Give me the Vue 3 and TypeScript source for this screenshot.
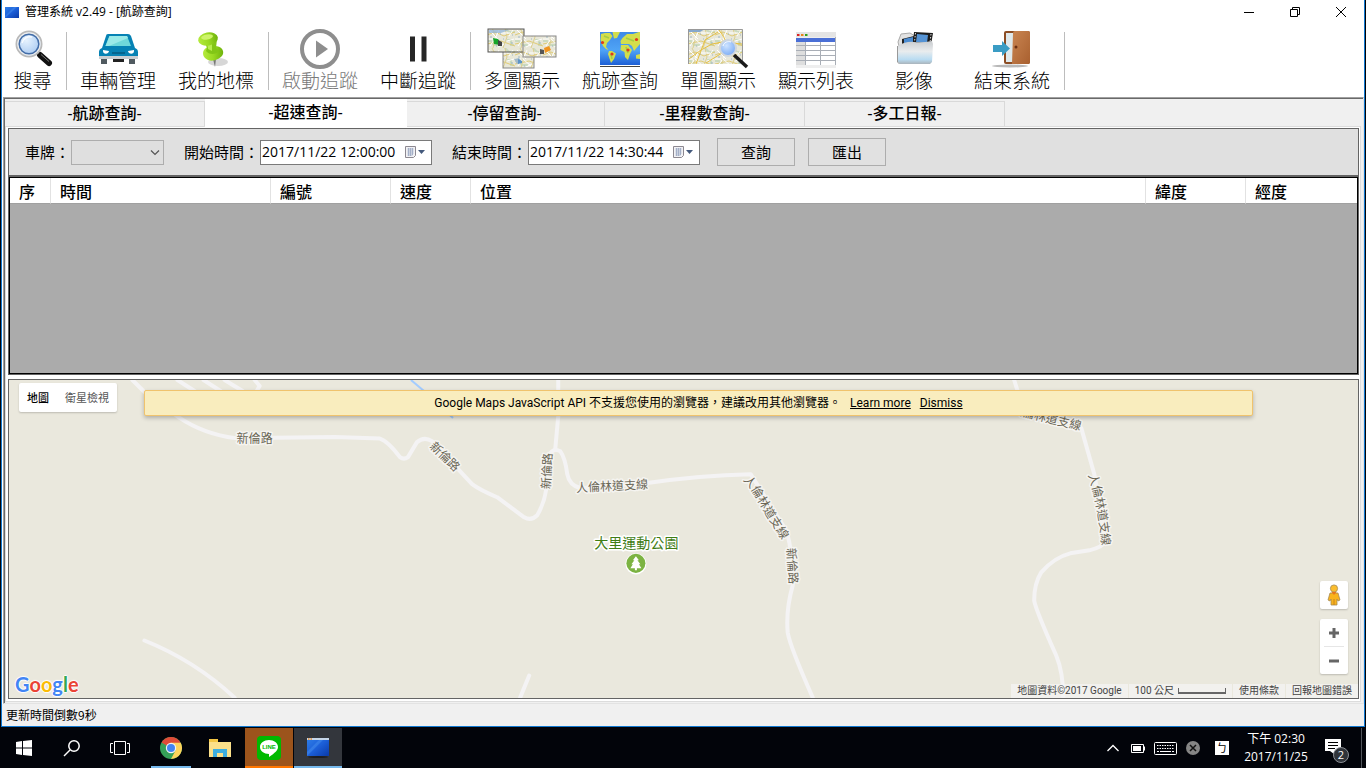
<script setup lang="ts">
import { ref } from 'vue'

const tabs = ['-航跡查詢-', '-超速查詢-', '-停留查詢-', '-里程數查詢-', '-多工日報-']
const activeTab = ref(1)

const columns = [
  { title: '序', cls: 'c-no' },
  { title: '時間', cls: 'c-time' },
  { title: '編號', cls: 'c-id' },
  { title: '速度', cls: 'c-speed' },
  { title: '位置', cls: 'c-place' },
  { title: '緯度', cls: 'c-lat' },
  { title: '經度', cls: 'c-lng' },
]

const startTime = ref('2017/11/22 12:00:00')
const endTime = ref('2017/11/22 14:30:44')
const plate = ref('')
</script>

<template>
  <div class="desktop">
    <svg class="defs" width="0" height="0" aria-hidden="true">
      <defs>
        <linearGradient id="gBlue" x1="0" y1="0" x2="1" y2="1">
          <stop offset="0" stop-color="#2f7fe8" /><stop offset=".5" stop-color="#1c5fd8" /><stop offset="1" stop-color="#0a3aa8" />
        </linearGradient>
        <radialGradient id="gLens" cx=".4" cy=".35" r=".7">
          <stop offset="0" stop-color="#e6f2fe" /><stop offset="1" stop-color="#a3c6f0" />
        </radialGradient>
        <radialGradient id="gLens2" cx=".4" cy=".35" r=".7">
          <stop offset="0" stop-color="#cfe4ff" /><stop offset="1" stop-color="#76a9f5" />
        </radialGradient>
        <linearGradient id="gGreen" x1="0" y1="0" x2="1" y2="0">
          <stop offset="0" stop-color="#b4ea3c" /><stop offset=".5" stop-color="#9ada22" /><stop offset="1" stop-color="#6fb30c" />
        </linearGradient>
        <linearGradient id="gSea" x1="0" y1="0" x2="0" y2="1">
          <stop offset="0" stop-color="#3e8ae8" /><stop offset=".55" stop-color="#4fa4f6" /><stop offset="1" stop-color="#1d5fd6" />
        </linearGradient>
        <linearGradient id="gSilver" x1="0" y1="0" x2="0" y2="1">
          <stop offset="0" stop-color="#c9cccf" /><stop offset=".45" stop-color="#e9ecee" /><stop offset=".8" stop-color="#b9dcf2" /><stop offset="1" stop-color="#aab4bb" />
        </linearGradient>
        <linearGradient id="gDoor" x1="0" y1="0" x2="1" y2="1">
          <stop offset="0" stop-color="#c98552" /><stop offset="1" stop-color="#a9602f" />
        </linearGradient>
        <pattern id="streets" width="28" height="20" patternUnits="userSpaceOnUse">
          <rect width="28" height="20" fill="#e8e7d8" />
          <path d="M0 13h4l3 4h6M18 0l4 4h6M20 12h4v5h3" stroke="#cbdabf" stroke-width="2" fill="none" />
          <path d="M0 7l8-3 9 4 11-4M0 16l14-3 14 5" stroke="#e0cb76" stroke-width="1" fill="none" />
          <path d="M5 0l4 8-3 12M18 0l2 9-4 11" stroke="#dccf8e" stroke-width="1" fill="none" />
          <path d="M2 2l9 9M12 2l-4 9 8 7M22 8l4-6M3 18l4-6M20 13l7-2M0 11h6M14 5h9M11 19l6-3" stroke="#fff" stroke-width="1" fill="none" />
          <path d="M3 9h2M13 6h1M24 15h2M9 18h1M16 11h1M25 7h1" stroke="#9db6c6" stroke-width="1" />
        </pattern>
      </defs>
    </svg>

    <main class="window">
      <header class="titlebar">
        <svg class="app-icon" viewBox="0 0 14 11"><rect width="14" height="11" fill="url(#gBlue)" /><path d="M0 9L9 0h3L0 11z" fill="#4f95f2" opacity=".4" /></svg>
        <h1>管理系統 v2.49 - [航跡查詢]</h1>
        <div class="win-buttons">
          <button type="button" aria-label="最小化"><svg viewBox="0 0 12 12"><path d="M1 6.500h10" /></svg></button>
          <button type="button" aria-label="還原"><svg viewBox="0 0 12 12"><path d="M1.500 3.500h7v7h-7zM3.500 3.500v-2h7v7h-2" /></svg></button>
          <button type="button" aria-label="關閉"><svg viewBox="0 0 12 12"><path d="M1 1l10 10M11 1L1 11" /></svg></button>
        </div>
      </header>

      <nav class="toolbar">
        <button type="button" class="tool tool-search">
          <svg width="40" height="42" viewBox="0 0 40 42">
            <path d="M24 25l3 3" stroke="#888" stroke-width="3" />
            <path d="M27 27l9 8" stroke="#111" stroke-width="6" stroke-linecap="round" />
            <path d="M28 26.500l8 7" stroke="#777" stroke-width="1" />
            <circle cx="16" cy="16" r="12.500" fill="url(#gLens)" stroke="#b9b9b9" stroke-width="2" />
            <circle cx="16" cy="16" r="11" fill="none" stroke="#ededed" stroke-width="1.500" />
            <circle cx="16" cy="16" r="9.800" fill="none" stroke="#436da8" stroke-width="1.500" />
            <path d="M9 15c1-5 6-7 10-6" stroke="#fff" stroke-width="1.500" fill="none" opacity=".8" />
          </svg>
          <span>搜尋</span>
        </button>
        <i class="sep"></i>
        <button type="button" class="tool">
          <svg width="40" height="42" viewBox="0 0 40 42">
            <path d="M3 30h6v6H3zM31 30h6v6h-6z" fill="#505a60" />
            <path d="M15 31h11v3H15z" fill="#222" />
            <path d="M10 6h20q2 0 3 2l4 12q3 1 3 4v5H1v-5q0-3 3-4L8 8q0-2 2-2z" fill="#0682b4" />
            <path d="M11.500 8h17.500l4 10H7.500z" fill="#6fd8da" />
            <path d="M18 8h11l1 2-19 8H7.500l4-10z" fill="#9aeae8" />
            <path d="M1 28h39v3H1z" fill="#c9ced2" />
            <path d="M5 22l6 1c0 3-6 4-6 0zM36 22l-6 1c0 3 6 4 6 0z" fill="#fff" />
            <path d="M14 25h13" stroke="#04648e" stroke-width="2" />
          </svg>
          <span>車輛管理</span>
        </button>
        <button type="button" class="tool">
          <svg width="40" height="42" viewBox="0 0 40 42">
            <ellipse cx="22" cy="34" rx="10" ry="4" fill="#c6c6c6" opacity=".7" />
            <path d="M17 31l2 8 1-8z" fill="#777" />
            <path d="M8 22c3-4 6-4 11-4 6 0 9 4 8 8-2 5-10 8-15 6-5-2-6-7-4-10z" fill="url(#gGreen)" />
            <path d="M8 12l13-1-1 9 3 3c-3 4-10 4-13 0l1-3z" fill="#82c616" />
            <path d="M11 14l5-1v10l-4-2z" fill="#b7ec4e" />
            <ellipse cx="12" cy="11" rx="10" ry="6.500" transform="rotate(-10 12 11)" fill="url(#gGreen)" />
            <ellipse cx="11" cy="9" rx="6" ry="2.500" transform="rotate(-10 11 9)" fill="#cdf36b" />
          </svg>
          <span>我的地標</span>
        </button>
        <i class="sep"></i>
        <button type="button" class="tool" disabled>
          <svg width="40" height="42" viewBox="0 0 40 42">
            <circle cx="20" cy="21" r="18" fill="none" stroke="#8e8e8e" stroke-width="4" />
            <path d="M16 12.500v17L28 21z" fill="#8e8e8e" />
          </svg>
          <span>啟動追蹤</span>
        </button>
        <button type="button" class="tool">
          <svg width="40" height="42" viewBox="0 0 40 42"><path d="M12 8.500h5v25h-5zM23.500 8.500h5v25h-5z" fill="#262626" /></svg>
          <span>中斷追蹤</span>
        </button>
        <i class="sep"></i>
        <button type="button" class="tool">
          <svg width="70" height="42" viewBox="0 0 70 42">
            <rect x="16" y="20" width="31" height="20" fill="url(#streets)" stroke="#888" />
            <rect x="1" y="1" width="36" height="23" fill="url(#streets)" stroke="#555" />
            <path d="M2 2h20l-8 3H2z" fill="#8db2dc" opacity=".7" />
            <rect x="36" y="8" width="33" height="21" fill="url(#streets)" stroke="#888" />
            <path d="M6 10l5 1 2 3v3l-6-1z" fill="#17a52a" /><path d="M11 12l4 2v4h-4z" fill="#444" />
            <path d="M57 20l5-2 2 4-6 3z" fill="#f0941f" /><path d="M53 21l4 1v4h-4z" fill="#555" />
            <path d="M27 31l5-1 3 4-5 2z" fill="#a3bac8" /><path d="M31 31l4 2v2l-4 1z" fill="#5c94c8" />
          </svg>
          <span>多圖顯示</span>
        </button>
        <button type="button" class="tool">
          <svg width="42" height="42" viewBox="0 0 42 42">
            <rect x="1" y="4" width="40" height="33" fill="url(#gSea)" />
            <g fill="#d3de4c">
              <path d="M2 6l4-1 5 0 2.500 3-2.500 4-3 3-1 4 2.500 3-2.500-1-3-3-2.500-6z" />
              <path d="M13.500 4H21l-3 6-3 .5z" />
              <path d="M10 23l3 0 4 2.500-2 5.500-3 4-1-3-2-6z" />
              <path d="M21.500 13l2-3 4.500-4 6 0 6-2h1v12l-3.500 4-2.500 3-2-5-3-2-5 0-3 0z" />
              <path d="M22 17l7 0 4 5-2 4-2 6-3-3-.5-5-4-2z" />
              <path d="M37 27l4-1v5l-4-.5z" />
            </g>
            <path d="M5 8l5 2M27 10l8 3M27 19l2 6M12 26l1 5" stroke="#a4cc44" stroke-width="1.500" />
            <g fill="#e03a1c"><circle cx="3.500" cy="14.500" r="1.600" /><circle cx="13" cy="26" r="1.600" /><circle cx="29" cy="22" r="1.600" /><circle cx="37.500" cy="11.500" r="1.600" /></g>
            <path d="M1 38.500h40" stroke="#444" stroke-width="1" />
          </svg>
          <span>航跡查詢</span>
        </button>
        <button type="button" class="tool">
          <svg width="62" height="42" viewBox="0 0 62 42">
            <rect x="1" y="1" width="55" height="35" fill="url(#streets)" />
            <path d="M1 1h17l-5 3H1z" fill="#86a8cc" /><path d="M1 1.500h54.500V36M1.500 1v35" stroke="#999" fill="none" />
            <path d="M2 31l12-9 11-6 10-2 20 2M9 36l9-24 13-8M32 2l6 9-3 14-16 10" stroke="#e6c040" stroke-width="1" fill="none" />
            <path d="M47 27l13 12" stroke="#1a1a1a" stroke-width="3.500" />
            <circle cx="41" cy="20" r="8" fill="url(#gLens2)" stroke="#cfd6dd" stroke-width="2" />
            <path d="M36 18c1-4 5-5 8-4" stroke="#fff" fill="none" />
          </svg>
          <span>單圖顯示</span>
        </button>
        <button type="button" class="tool">
          <svg width="42" height="42" viewBox="0 0 42 42">
            <rect x="1" y="4" width="40" height="36" fill="#eee" />
            <rect x="1" y="4" width="40" height="5" fill="#e4e4e4" />
            <g stroke-width="2"><path d="M2 7h2.500" stroke="#d22" /><path d="M6 7h2.500" stroke="#e8841c" /><path d="M10 7h2.500" stroke="#37a41c" /></g>
            <rect x="1" y="10" width="40" height="4" fill="#4a6fd6" />
            <rect x="1" y="14" width="40" height="23" fill="#fff" /><rect x="1" y="14" width="9" height="23" fill="#dedede" />
            <path d="M1 17.500h40M1 22.500h40M1 27.500h40M1 32.500h40M10.500 14v23M25.500 14v23M40.500 9v28" stroke="#a9aeb6" fill="none" />
          </svg>
          <span>顯示列表</span>
        </button>
        <button type="button" class="tool">
          <svg width="42" height="42" viewBox="0 0 42 42">
            <path d="M5 14l3-8 9-1 5 3v10H6z" fill="#e2e2e2" stroke="#aaa" />
            <path d="M9 11l12-3v9L9 19z" fill="#222" /><path d="M11 11l9-2v7h-9z" fill="#4b8bd0" />
            <path d="M21 4l19 1-2 12-18-2z" fill="#1b1b1b" /><path d="M24 6l11 1-1 8-11-1z" fill="#5593d4" />
            <path d="M38 6l-1 9M22.500 5l-1 9" stroke="#ddd" stroke-dasharray="1.500 1.500" />
            <path d="M5 18q8-5 16-4t18-1l1 3-1 18-2 2H7l-2-2z" fill="url(#gSilver)" />
            <path d="M4.500 18v16l2 2" stroke="#999" fill="none" />
          </svg>
          <span>影像</span>
        </button>
        <button type="button" class="tool">
          <svg width="42" height="42" viewBox="0 0 42 42">
            <ellipse cx="19" cy="38" rx="18" ry="1.500" fill="#b8b8b8" />
            <rect x="13" y="3" width="26" height="33" rx="2" fill="#8c4d24" />
            <rect x="15" y="5" width="9" height="29" fill="#dfe9ec" />
            <path d="M22 5q0-2 2-2h13q2 0 2 2v29q0 2-2 2H21z" fill="url(#gDoor)" />
            <circle cx="25" cy="19" r="1.500" fill="#6b2f12" />
            <path d="M2 17h9v-4l8 7.500-8 7.500v-4H2z" fill="#3a9cc4" />
          </svg>
          <span>結束系統</span>
        </button>
        <i class="sep"></i>
      </nav>

      <section class="mdi">
        <div class="tabs" role="tablist">
          <button
            v-for="(tab, i) in tabs"
            :key="tab"
            type="button"
            role="tab"
            class="tab"
            :class="{ active: i === activeTab }"
            :aria-selected="i === activeTab"
            @click="activeTab = i"
          >{{ tab }}</button>
        </div>

        <div class="page">
          <form class="filters" @submit.prevent>
            <div class="field">
              <label for="plate">車牌：</label>
              <div class="combo">
                <select id="plate" v-model="plate"><option value=""></option></select>
                <svg viewBox="0 0 10 6"><path d="M1 .5l4 4 4-4" fill="none" stroke="#555" stroke-width="1.200" /></svg>
              </div>
            </div>
            <div class="field">
              <label for="start">開始時間：</label>
              <div class="date">
                <input id="start" v-model="startTime" type="text" />
                <button type="button" aria-label="選擇開始時間">
                  <svg viewBox="0 0 21 13"><path d="M.5.5h10v9l-2 2h-8z" fill="#f2f2f5" stroke="#8c8890" /><path d="M2.500 3h6M2.500 5h6M2.500 7h6M2.500 9h5M3.500 2v8M5.500 2v8M7.500 2v7" stroke="#a4b0c8" /><path d="M13 4h7l-3.500 4z" fill="#44597c" /></svg>
                </button>
              </div>
            </div>
            <div class="field">
              <label for="end">結束時間：</label>
              <div class="date">
                <input id="end" v-model="endTime" type="text" />
                <button type="button" aria-label="選擇結束時間">
                  <svg viewBox="0 0 21 13"><path d="M.5.5h10v9l-2 2h-8z" fill="#f2f2f5" stroke="#8c8890" /><path d="M2.500 3h6M2.500 5h6M2.500 7h6M2.500 9h5M3.500 2v8M5.500 2v8M7.500 2v7" stroke="#a4b0c8" /><path d="M13 4h7l-3.500 4z" fill="#44597c" /></svg>
                </button>
              </div>
            </div>
            <div class="actions">
              <button type="submit">查詢</button>
              <button type="button">匯出</button>
            </div>
          </form>

          <div class="grid">
            <table>
              <thead>
                <tr><th v-for="c in columns" :key="c.title" :class="c.cls" scope="col">{{ c.title }}</th></tr>
              </thead>
            </table>
          </div>

          <div class="map">
            <svg class="roads" viewBox="9 380 1348 317" preserveAspectRatio="xMidYMid slice">
              <defs>
                <path id="lblA" d="M742 480C750 487 755 497 761 507S770 522 779 536" />
                <path id="lblB" d="M1090 475Q1101 508 1104 550" />
              </defs>
              <g class="road">
                <path d="M133 380L144 391L179 417Q204 434 236 438L335 437L380 438.500Q388 441 400 457Q404 460 408 457L417 442Q424 436 432 441L472 484Q480 490 497 497L524 517Q531 521 537 515Q544 503 546 489L548 456Q553 447 560 451Q565 458 567 474Q569 485 580 488L645 483Q700 475 750 474L786 531Q793 557 792 585Q785 610 787 632Q789 645 812 697" />
                <path d="M558 380V416L555 449M178 380L195 391M204 380L221 391M225 380L243 391M255 380L260 386L257 391" />
                <path d="M1013 380L1020 402L1080 428L1093 474L1104 540Q1102 547 1088 550L1069 553Q1053 557 1040 572Q1033 583 1033 600Q1034 608 1055 655Q1062 672 1062 697" />
                <path d="M145 640Q195 660 235 697M529 675L520 697" />
              </g>
              <path d="M411 380L424 391L453 418" class="stream" />
              <g class="label">
                <text x="237" y="443">新倫路</text>
                <text transform="translate(429 447) rotate(44)">新倫路</text>
                <text transform="translate(550 489) rotate(-87)">新倫路</text>
                <text transform="translate(576 492) rotate(-3)">人倫林道支線</text>
                <text><textPath href="#lblA">人倫林道支線</textPath></text>
                <text transform="translate(786 548) rotate(86)">新倫路</text>
                <text transform="translate(1009 413) rotate(14)">人倫林道支線</text>
                <text transform="translate(-3 0)"><textPath href="#lblB">人倫林道支線</textPath></text>
                <text class="park" x="594" y="548">大里運動公園</text>
              </g>
              <circle cx="635.500" cy="563.500" r="10.500" fill="#fff" />
              <circle cx="635.500" cy="563" r="9.500" fill="#7cb342" />
              <path d="M635.500 556l3 4h-1.500l3 4h-1.500l2.500 4h-4.500v2h-2v-2H630l2.500-4H631l3-4h-1.500z" fill="#fff" />
            </svg>

            <div class="map-type">
              <button type="button" class="on">地圖</button>
              <button type="button">衛星檢視</button>
            </div>

            <div class="notice">
              <span>Google Maps JavaScript API 不支援您使用的瀏覽器，建議改用其他瀏覽器。</span>
              <a href="#learn">Learn more</a>
              <a href="#dismiss">Dismiss</a>
            </div>

            <a class="logo" href="#google" aria-label="Google"><span class="b">G</span><span class="r">o</span><span class="y">o</span><span class="b">g</span><span class="g">l</span><span class="r">e</span></a>

            <div class="controls">
              <button type="button" class="pegman" aria-label="街景服務">
                <svg viewBox="0 0 14 22"><path d="M3 9h8l2 7-2 1-1-2v6H4v-6l-1 2-2-1z" fill="#f9b31c" stroke="#a58a55" stroke-width=".8" /><circle cx="7" cy="4.500" r="3.600" fill="#fbbd2c" stroke="#a58a55" stroke-width=".8" /><path d="M4.500 8h5L7 11z" fill="#e8761c" /><path d="M7 15v6" stroke="#c6831c" /></svg>
              </button>
              <div class="zoom">
                <button type="button" aria-label="放大"><svg viewBox="0 0 12 12"><path d="M1 6h10M6 1v10" /></svg></button>
                <button type="button" aria-label="縮小"><svg viewBox="0 0 12 12"><path d="M1 6h10" /></svg></button>
              </div>
            </div>

            <div class="credits">
              <span>地圖資料©2017 Google</span>
              <span class="scale">100 公尺<i></i></span>
              <a href="#terms">使用條款</a>
              <a href="#report">回報地圖錯誤</a>
            </div>
          </div>
        </div>
      </section>

      <footer class="status">更新時間倒數9秒</footer>
    </main>

    <footer class="taskbar">
      <button type="button" aria-label="開始"><svg width="18" height="18" viewBox="0 0 18 18"><path d="M1 3l6-1v6.500H1zM8 2l9-1v7.500H8zM1 9.500h6V16l-6-1zM8 9.500h9V17l-9-1z" fill="#fff" /></svg></button>
      <button type="button" aria-label="搜尋"><svg width="18" height="18" viewBox="0 0 18 18"><path d="M7 11L1 17" stroke="#fff" stroke-width="1.500" /><circle cx="11" cy="7" r="5.200" fill="none" stroke="#fff" stroke-width="1.500" /></svg></button>
      <button type="button" aria-label="工作檢視"><svg width="22" height="18" viewBox="0 0 22 18"><path d="M5.500 2.500h11v13h-11zM4 4.500H1.500v9H4M18 4.500h2.500v9H18" fill="none" stroke="#fff" /></svg></button>
      <button type="button" class="pinned running" aria-label="Chrome">
        <svg width="22" height="22" viewBox="0 0 22 22">
          <circle cx="11" cy="11" r="11" fill="#35a058" />
          <path d="M11 11L1.500 5.500A11 11 0 0 1 20.500 5.500z" fill="#df4b38" />
          <path d="M11 5.800h9.700A11 11 0 0 1 11 22l4.500-8.500z" fill="#fdd35c" />
          <circle cx="11" cy="11" r="5.200" fill="#f3f3f3" /><circle cx="11" cy="11" r="4" fill="#4384f3" />
        </svg>
      </button>
      <button type="button" aria-label="檔案總管">
        <svg width="22" height="20" viewBox="0 0 22 20"><path d="M0 2h8l1 2h13v15H0z" fill="#fbe08a" /><path d="M0 1h9v3H0z" fill="#f3c644" /><path d="M4 11h14v8h-4v-4H8v4H4z" fill="#3daee0" /></svg>
      </button>
      <button type="button" class="line" aria-label="LINE">
        <svg width="24" height="24" viewBox="0 0 24 24"><rect width="24" height="24" rx="4" fill="#00b900" /><path d="M12 4c5 0 9 3 9 7 0 3-3 6-9 10v-3c-5 0-9-3-9-7s4-7 9-7z" fill="#fff" /><text x="12" y="13" text-anchor="middle">LINE</text></svg>
      </button>
      <button type="button" class="current" aria-label="管理系統">
        <svg width="24" height="22" viewBox="0 0 24 22"><ellipse cx="12" cy="20" rx="10" ry="1" fill="#1d1e22" /><rect x="1" y="1" width="22" height="18" fill="url(#gBlue)" /><path d="M1 1h22v2H1z" fill="#c5d5e8" /><path d="M2 2h5" stroke="#e58a2c" stroke-width="1.500" stroke-dasharray="1.500 1" /><path d="M1 15L13 3h4L1 19z" fill="#5aa2f5" opacity=".35" /></svg>
      </button>

      <div class="tray">
        <svg width="12" height="8" viewBox="0 0 12 8"><path d="M.5 7L6 1.500 11.500 7" fill="none" stroke="#fff" stroke-width="1.300" /></svg>
        <svg width="15" height="9" viewBox="0 0 15 9"><path d="M.5.5h12v8H.5zM13.500 2.500v4" fill="none" stroke="#fff" /><path d="M2 2h8v5H2z" fill="#fff" /></svg>
        <svg width="23" height="13" viewBox="0 0 23 13"><rect x=".5" y=".5" width="22" height="12" rx="1" fill="none" stroke="#fff" /><path d="M3 3.500h17M3 6.500h17" stroke="#fff" stroke-dasharray="1.500 1" /><path d="M3 9.500h2m1 0h11m1 0h2" stroke="#fff" /></svg>
        <svg width="14" height="14" viewBox="0 0 14 14"><circle cx="7" cy="7" r="7" fill="#858585" /><path d="M4 4l6 6M10 4l-6 6" stroke="#111" stroke-width="1.500" /></svg>
        <span class="ime">ㄅ</span>
        <time>下午 02:30<br />2017/11/25</time>
        <div class="notify">
          <svg width="16" height="15" viewBox="0 0 16 15"><path d="M0 0h16v12h-7v3l-4-3H0z" fill="#fff" /><path d="M3 3.500h10M3 6.500h10M3 9.500h7" stroke="#000" /></svg>
          <b>2</b>
        </div>
        <i class="peek"></i>
      </div>
    </footer>
  </div>
</template>

<style>
body { background: #000; }
button, input, select { font: inherit; color: inherit; }
</style>

<style scoped>
* { box-sizing: border-box; }
.desktop {
  min-height: 100vh; display: flex; flex-direction: column; background: #02040a; color: #000;
  font-family: "Open Sans", "Noto Sans CJK TC", sans-serif; font-size: 12px;
}
.defs { position: absolute; }
button { border: 0; background: none; padding: 0; }
svg { display: block; flex: none; }
h1 { margin: 0; font-size: 12px; font-weight: 400; line-height: 24px; }

.window {
  flex: 1; display: flex; flex-direction: column; margin: 0 1px 1px; background: #fff;
  border: 1px solid #1078d0; border-top: 0;
}
.titlebar { display: flex; align-items: center; height: 24px; padding-left: 3px; gap: 6px; }
.app-icon { width: 14px; height: 11px; }
.win-buttons { margin-left: auto; display: flex; }
.win-buttons button { width: 46px; height: 24px; display: grid; place-items: center; }
.win-buttons svg { width: 12px; height: 12px; fill: none; stroke: #000; }

.toolbar { display: flex; height: 73px; padding-top: 4px; }
.tool { width: 98px; display: flex; flex-direction: column; align-items: center; justify-content: flex-start; }
.tool-search { width: 61px; }
.tool span { font-family: "Noto Sans CJK TC", sans-serif; font-weight: 300; font-size: 19px; line-height: 20px; white-space: nowrap; }
.tool:disabled { color: #7a7a7a; }
.sep { width: 1px; height: 58px; margin: 4px 2px 0 3px; background: #bdbdbd; }

.mdi {
  flex: 1; display: flex; flex-direction: column; margin: 0 0 0 1px; background: #f0f0f0; padding: 0 2px 1px 0;
  border: 1px solid; border-color: #a0a0a0 #e3e3e3 #e3e3e3 #a0a0a0;
  box-shadow: inset 1px 1px #696969;
}
.tabs { display: flex; align-items: flex-end; height: 28px; padding: 1px 0 0 1px; }
.tab {
  width: 200px; height: 25px; border: 1px solid #d9d9d9; border-left-width: 0; border-bottom: 0;
  font-family: "Liberation Sans", "Noto Sans CJK TC", sans-serif; font-size: 16px; font-weight: 500; line-height: 24px;
}
.tab.active { height: 28px; width: 202px; margin: 0 -2px -1px 0; background: #fff; border-color: #fff; position: relative; padding-bottom: 2px; }

.page {
  flex: 1; display: flex; flex-direction: column; margin-left: 1px;
  background: #fff; border: 1px solid #dcdcdc; padding: 1px 1px 2px 2px;
}
.filters {
  display: flex; align-items: center; height: 48px; padding-left: 16px; gap: 20px;
  background: #e0e0e0; border: 1px solid #646464;
}
.field { display: flex; align-items: center; gap: 1px; }
.field label { font-family: "Noto Sans CJK TC", sans-serif; font-size: 15px; line-height: 24px; white-space: nowrap; }
.combo { position: relative; width: 93px; height: 25px; }
.combo select { appearance: none; width: 100%; height: 100%; border: 1px solid #adadad; border-radius: 0; background: #dfdfdf; }
.combo svg { position: absolute; right: 4px; top: 10px; width: 10px; height: 6px; pointer-events: none; }
.date { display: flex; align-items: center; width: 172px; height: 25px; background: #fff; border: 1px solid #7a7a7a; }
.date input { flex: 1; min-width: 0; border: 0; padding: 0 0 0 1px; font-size: 14px; line-height: 22px; outline: 0; background: none; }
.date svg { width: 21px; height: 13px; }
.date button { margin-right: 5px; }
.actions { display: flex; gap: 13px; margin-left: -3px; }
.actions button { width: 78px; height: 28px; border: 1px solid #adadad; background: #e1e1e1; font-size: 15px; line-height: 24px; }

.grid { flex: 195 1 0; border: 1px solid #646464; box-shadow: inset 0 0 0 1px #000; padding: 1px; background: #ababab; }
table { width: 100%; table-layout: fixed; border-collapse: separate; border-spacing: 0; background: #fff; }
th {
  height: 26px; padding: 0 0 0 9px; text-align: left; border-right: 1px solid #e2e2e2; border-bottom: 1px solid #a0a0a0;
  font-family: "Noto Sans CJK TC", sans-serif; font-size: 16px; font-weight: 500; line-height: 24px;
}
.c-no { width: 41px; } .c-time { width: 220px; } .c-id { width: 120px; } .c-speed { width: 80px; }
.c-lat { width: 100px; } .c-lng { width: 111px; border-right: 0; }

.map { flex: 317 1 0; position: relative; margin-top: 4px; border: 1px solid #646464; background: #eae8dd; overflow: hidden; }
.roads { position: absolute; inset: 0; width: 100%; height: 100%; }
.road { fill: none; stroke: #f4f3f4; stroke-width: 4; stroke-linejoin: round; stroke-linecap: round; }
.stream { fill: none; stroke: #a3ccff; stroke-width: 2; }
.label { font-family: "Noto Sans CJK TC", sans-serif; font-size: 12px; fill: #6b6757; stroke: #f5f4f0; stroke-width: 3; stroke-linejoin: round; paint-order: stroke; }
.label .park { font-size: 14px; fill: #3f7d15; stroke: #fff; }

.map-type { position: absolute; left: 10px; top: 3px; display: flex; height: 29px; background: #fff; border-radius: 2px; box-shadow: 0 1px 2px rgba(0, 0, 0, .2); font-size: 11px; color: #565656; }
.map-type button { padding: 0 8px 2px; }
.map-type .on { color: #000; font-weight: 500; }
.notice {
  position: absolute; left: 10%; right: 105px; top: 10px; height: 26px; display: flex; justify-content: center; align-items: center;
  background: #f9edbe; border: 1px solid #f0c36d; border-radius: 2px; box-shadow: 0 2px 4px rgba(0, 0, 0, .25);
  font-family: Roboto, "Noto Sans CJK TC", sans-serif; font-size: 12px; line-height: 24px;
}
.notice a { color: #000; margin-left: 9px; }
.logo {
  position: absolute; left: 6px; bottom: 0; font-family: Lato, sans-serif; font-weight: 700; font-size: 20px; line-height: 28px; text-decoration: none;
  text-shadow: 1px 0 1px #fff, -1px 0 1px #fff, 0 1px 1px #fff, 0 -1px 1px #fff;
}
.b { color: #4285f4; } .r { color: #ea4335; } .y { color: #fbbc05; } .g { color: #34a853; }
.controls { position: absolute; right: 10px; bottom: 24px; width: 28px; display: flex; flex-direction: column; gap: 10px; }
.pegman, .zoom { background: #fff; border-radius: 2px; box-shadow: 0 1px 2px rgba(0, 0, 0, .2); }
.pegman { height: 28px; display: grid; place-items: center; }
.pegman svg { width: 14px; height: 22px; }
.zoom { display: flex; flex-direction: column; padding: 0 4px; }
.zoom button { height: 27px; display: grid; place-items: center; }
.zoom button + button { border-top: 1px solid #e6e6e6; height: 28px; }
.zoom svg { width: 12px; height: 12px; stroke: #666; stroke-width: 3; }
.credits { position: absolute; right: 0; bottom: 0; display: flex; gap: 1px; height: 14px; font-family: Roboto, "Noto Sans CJK TC", sans-serif; font-size: 10px; line-height: 14px; color: #444; }
.credits > * { background: rgba(245, 245, 245, .7); padding: 0 6px; color: #444; text-decoration: none; white-space: nowrap; }
.scale { display: flex; align-items: center; gap: 4px; }
.scale i { width: 48px; height: 6px; border: solid #666; border-width: 0 1px 2px; }

.status { height: 22px; padding-left: 4px; background: #f0f0f0; font-family: "Noto Sans CJK TC", sans-serif; line-height: 21px; }

.taskbar { display: flex; height: 40px; color: #fff; }
.taskbar > button { width: 48px; margin-right: 1px; display: grid; place-items: center; border-bottom: 2px solid transparent; padding-top: 2px; }
.taskbar > button:nth-child(-n + 3) { margin-right: 0; }
.taskbar > .pinned { margin-left: 3px; }
.taskbar > .running { background: linear-gradient(#76b9ed, #76b9ed) center bottom / 40px 2px no-repeat border-box; }
.taskbar > .line { background: #9c541c; border-color: #ff7600; }
.taskbar > .current { background: #33363c; border-color: #76b9ed; }
.line text { font: 700 6px "Liberation Sans", sans-serif; fill: #00b900; }
.tray { margin-left: auto; display: flex; align-items: center; gap: 12px; }
.tray > svg:nth-child(3) { margin-left: -4px; }
.tray > svg:nth-child(4) { margin-left: -3px; }
.ime { width: 14px; height: 14px; margin-left: 3px; background: #fff; color: #000; font-size: 11px; line-height: 14px; text-align: center; }
.tray time { width: 66px; margin-left: 2px; text-align: center; line-height: 18px; white-space: nowrap; }
.notify { position: relative; width: 24px; height: 18px; margin-left: 4px; }
.notify b { position: absolute; left: 8px; top: 8px; width: 16px; height: 16px; border-radius: 50%; background: #30343a; border: 1px solid #8b8f95; font-size: 11px; line-height: 14px; text-align: center; font-weight: 400; }
.peek { width: 1px; height: 40px; margin-right: 4px; background: #50545a; }
</style>
